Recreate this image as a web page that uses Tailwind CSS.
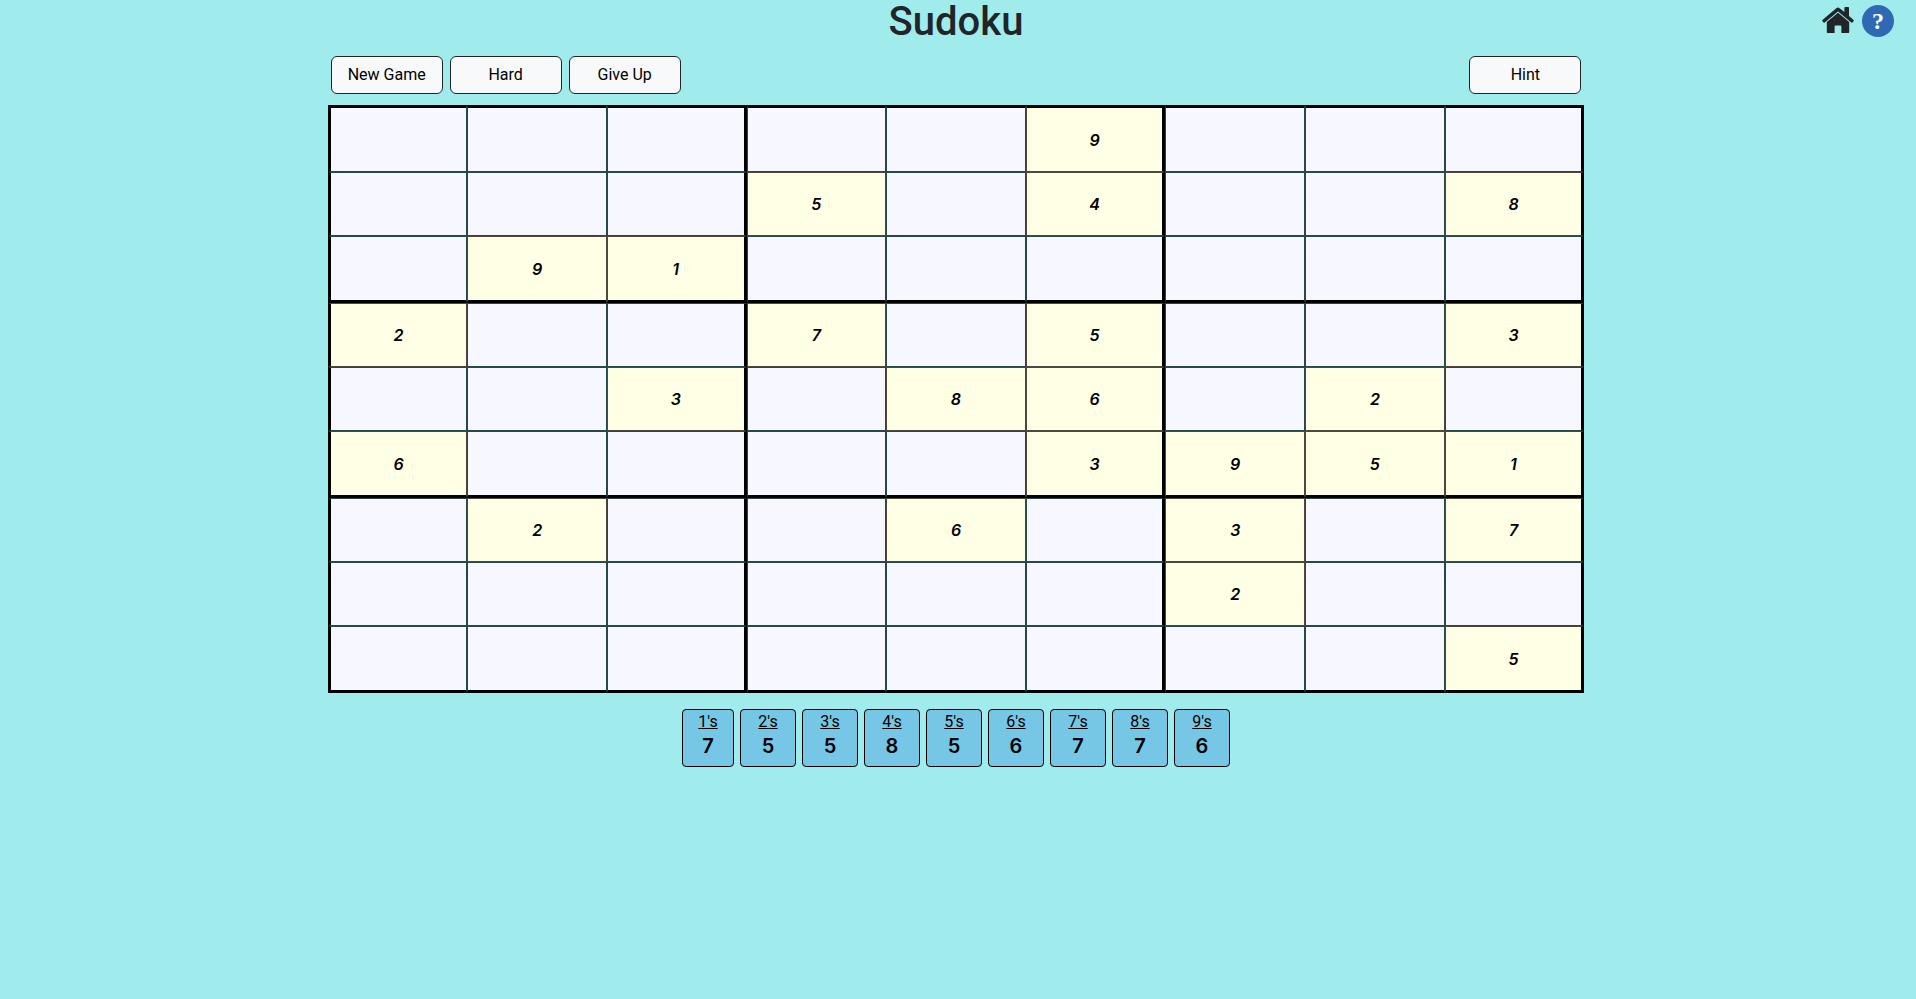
<!DOCTYPE html>
<html lang="en">
<head>
<meta charset="utf-8">
<title>Sudoku</title>
<script src="https://cdn.jsdelivr.net/npm/@tailwindcss/browser@4"></script>
</head>
<body class="relative min-h-screen bg-[#a0ecec] pr-1 font-['Roboto',sans-serif] text-base text-black">
<header>
<h1 class="text-center text-[40px] leading-11 font-medium text-[#212529]">Sudoku</h1>
<nav class="absolute top-[5px] right-[22px] flex items-center gap-2">
<a href="#" aria-label="Home"><svg class="block h-8 w-8" viewBox="0 0 32 32" fill="#212529"><path d="M16 7.8 4.8 17v10.2c0 .5.4.8.8.8h7v-6.6c0-.5.3-.8.8-.8h5.2c.5 0 .8.3.8.8V28h7c.5 0 .8-.3.8-.8V17z"/><path d="M31.6 14.9 27 11V2.8c0-.4-.3-.7-.7-.7h-3.2c-.4 0-.7.3-.7.7v4.3L17.600 3.200c-1-.8-2.300-.8-3.300 0L.4 14.900c-.4.300-.4.800-.1 1.100l1.300 1.500c.3.300.8.400 1.100.1L16 6.600l13.300 11c.3.300.8.200 1.100-.1l1.300-1.500c.3-.3.300-.8-.1-1.100z"/></svg></a>
<button aria-label="Help" class="flex h-8 w-8 items-center justify-center rounded-full bg-[#2f69b4] font-['Liberation_Serif',serif] text-2xl font-bold text-white">?</button>
</nav>
</header>
<main class="mx-auto w-2/3 px-[9px]">
<div class="mt-3 mb-[11px] flex gap-[7px] px-[3px]">
<button class="h-[38px] w-28 rounded-md border border-[#212529] bg-[#f8f9fa]">New Game</button>
<button class="h-[38px] w-28 rounded-md border border-[#212529] bg-[#f8f9fa]">Hard</button>
<button class="h-[38px] w-28 rounded-md border border-[#212529] bg-[#f8f9fa]">Give Up</button>
<button class="ml-auto h-[38px] w-28 rounded-md border border-[#212529] bg-[#f8f9fa]">Hint</button>
</div>
<table aria-label="Sudoku board" class="w-full table-fixed border-separate border-spacing-0 text-center font-['Inter',sans-serif] font-semibold italic"><tbody id="board"></tbody></table>
</main>
<section id="counts" aria-label="Numbers left" class="mt-4 flex justify-center gap-[6px] text-center"></section>
<script>
const rows = ['.....9...', '...5.4..8', '.91......', '2..7.5..3', '..3.86.2.', '6....3951', '.2..6.3.7', '......2..', '........5'];
document.getElementById('board').innerHTML = rows.map((row, r) => {
  // Rows with a thick edge are taller by that edge
  const h = r === 0 || r % 3 === 2 ? 'h-[67px]' : 'h-[64px]';
  return '<tr>' + [...row].map((v, c) => {
    const top = r === 0 ? 'border-t-3 border-t-black' : 'border-t';
    const bottom = r % 3 === 2 ? 'border-b-3 border-b-black' : 'border-b';
    const left = c === 0 ? 'border-l-3 border-l-black' : 'border-l';
    const right = c % 3 === 2 ? 'border-r-3 border-r-black' : 'border-r';
    const tone = v === '.' ? 'border-[#284848] bg-[#f6f7ff]' : 'border-[#50483c] bg-[#ffffe6]';
    const body = v === '.' ? `<input class="block h-full w-full text-center outline-none" maxlength="1" aria-label="Row ${r + 1}, column ${c + 1}">` : v;
    return `<td class="${h} p-0 ${tone} ${top} ${bottom} ${left} ${right}">${body}</td>`;
  }).join('') + '</tr>';
}).join('');
document.getElementById('counts').innerHTML = [7, 5, 5, 8, 5, 6, 7, 7, 6].map((n, i) =>
  `<div class="${i ? 'w-14' : 'w-13'} rounded border border-black bg-[#76c6e6] pb-2"><div class="leading-6 underline">${i + 1}'s</div><div class="font-['Inter',sans-serif] text-xl leading-6 font-semibold">${n}</div></div>`).join('');
</script>
</body>
</html>
